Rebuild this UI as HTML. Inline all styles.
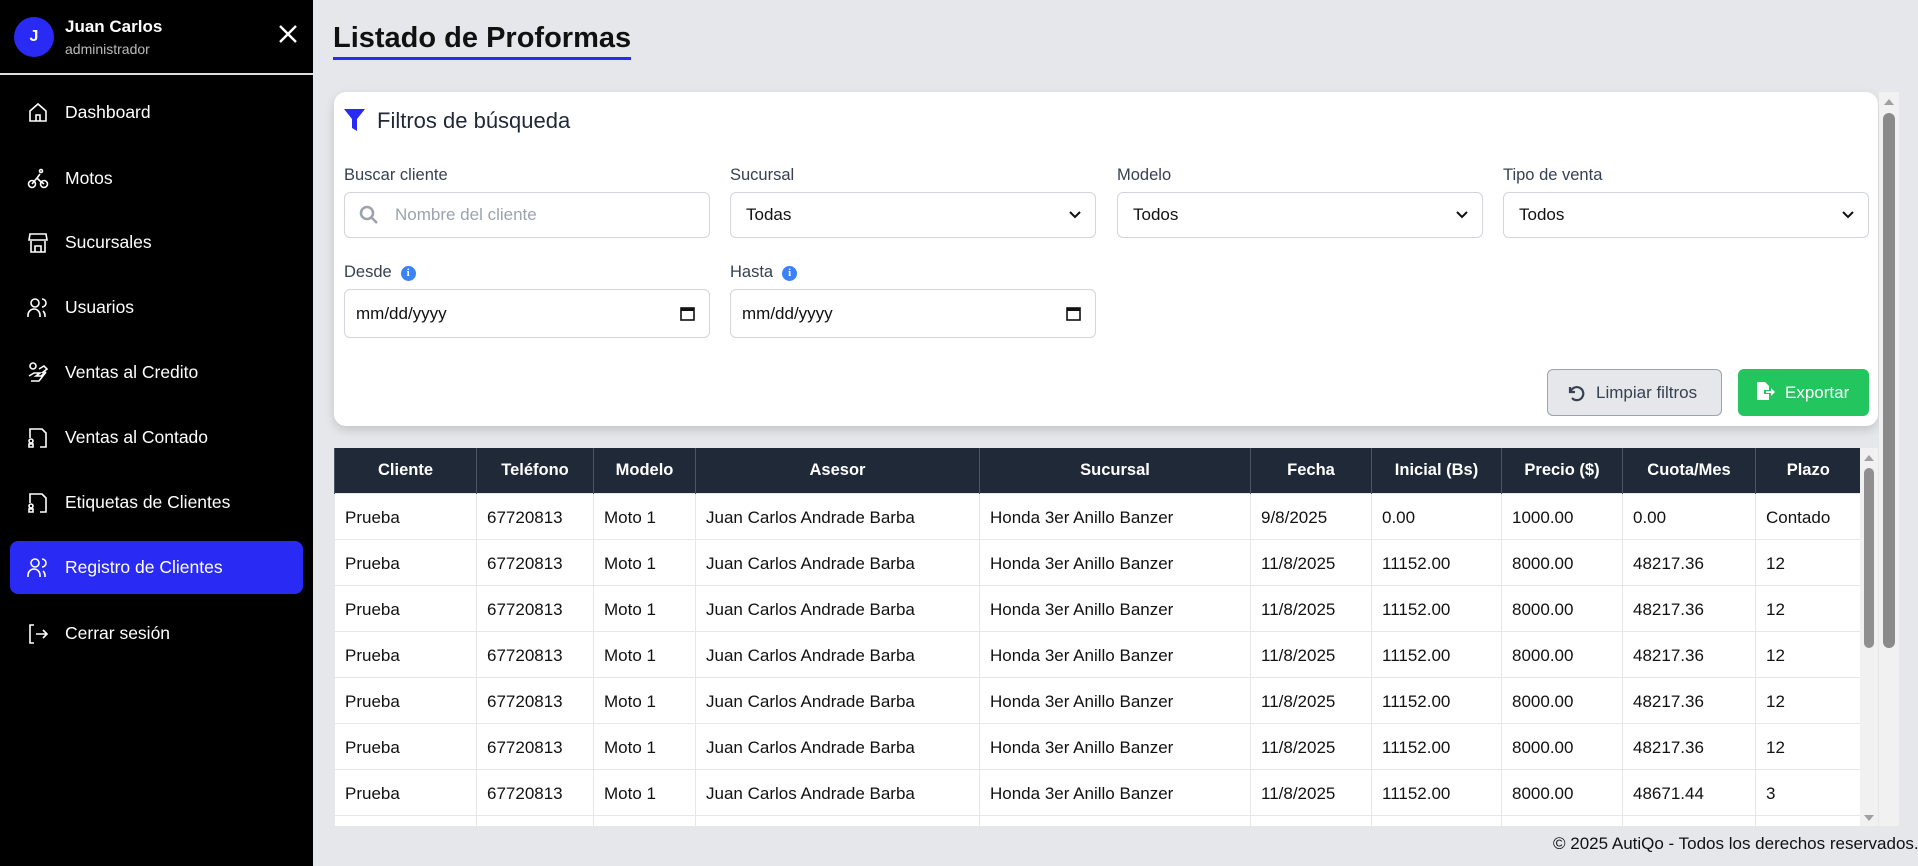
<!DOCTYPE html>
<html><head><meta charset="utf-8"><style>
*{box-sizing:border-box;margin:0;padding:0}
body{width:1918px;height:866px;overflow:hidden;background:#e5e7eb;font-family:"Liberation Sans",sans-serif;position:relative;color:#111827}
.sb{position:absolute;left:0;top:0;width:313px;height:866px;background:#000;color:#fff}
.av{position:absolute;left:14px;top:17px;width:40px;height:40px;border-radius:50%;background:#2a2af5;color:#fff;font-weight:bold;font-size:16px;text-align:center;line-height:40px}
.nm{position:absolute;left:65px;top:17px;font-size:17px;font-weight:bold}
.rl{position:absolute;left:65px;top:41px;font-size:14px;color:#bbb}
.x{position:absolute;left:276px;top:22px}
.hr{position:absolute;left:0;top:73px;width:313px;height:2px;background:#ddd}
.nav{position:absolute;left:10px;width:293px;height:53px;border-radius:8px;font-size:17.5px;line-height:53px;padding-left:55px}
.nav svg{position:absolute;left:16px;top:15px}
.act{background:#2a2af5}
h1{position:absolute;left:333px;top:22px;font-size:29px;font-weight:bold;color:#111;border-bottom:3px solid #2a2af5;padding-bottom:3px;line-height:32px}
.card{position:absolute;left:334px;top:92px;width:1544px;height:334px;background:#fff;border-radius:12px;box-shadow:0 4px 10px rgba(0,0,0,.15)}
.ft{position:absolute;left:377px;top:108px;font-size:22px;color:#1f2937}
.lb{position:absolute;font-size:16.5px;color:#374151}
.in{position:absolute;width:366px;height:46px;border:1px solid #d1d5db;border-radius:6px;background:#fff;font-size:17px;padding-left:15px;line-height:44px;color:#111}
.in .ar{position:absolute;right:14px;top:0}
.info{display:inline-block;width:15px;height:15px;border-radius:50%;background:#3b82f6;color:#fff;font-size:11px;font-weight:bold;text-align:center;line-height:15px;margin-left:9px;vertical-align:1px;font-family:"Liberation Serif",serif}
.btn{position:absolute;top:369px;height:47px;border-radius:6px;font-size:17px;line-height:45px}
table{position:absolute;left:334px;top:448px;border-collapse:collapse;table-layout:fixed;width:1526px;background:#fff}
th{background:#1f2937;color:#fff;font-size:16.5px;font-weight:bold;height:45px;border-left:1px solid #4b5563}
td{height:46px;font-size:17px;padding-left:10px;padding-top:3px;border:1px solid #e5e7eb;color:#111}
.clip{position:absolute;left:334px;top:448px;width:1530px;height:378px;overflow:hidden}
.clip table{left:0;top:0}
</style></head><body>
<div class="sb">
<div class="av">J</div>
<div class="nm">Juan Carlos</div>
<div class="rl">administrador</div>
<svg class="x" width="24" height="24" viewBox="0 0 24 24"><path d="M4 4L20 20M20 4L4 20" stroke="#fff" stroke-width="2.4"/></svg>
<div class="hr"></div>
<div class="nav" style="top:86px"><svg width="24" height="24" viewBox="0 0 24 24" fill="none" stroke="#fff" stroke-width="1.6"><path d="M4 10L12 3l8 7v10H4z"/><path d="M10 20v-6h4v6"/></svg>Dashboard</div>
<div class="nav" style="top:152px"><svg width="24" height="24" viewBox="0 0 24 24" fill="none" stroke="#fff" stroke-width="1.6"><circle cx="6" cy="17" r="3.5"/><circle cx="18" cy="17" r="3.5"/><circle cx="15" cy="4" r="1.5"/><path d="M6 17l5-6 3 3 4 3M11 11l3-4"/></svg>Motos</div>
<div class="nav" style="top:216px"><svg width="24" height="24" viewBox="0 0 24 24" fill="none" stroke="#fff" stroke-width="1.6"><path d="M4 3h16l1 6H3z M5 10v11h14V10 M9 21v-6h6v6"/></svg>Sucursales</div>
<div class="nav" style="top:281px"><svg width="24" height="24" viewBox="0 0 24 24" fill="none" stroke="#fff" stroke-width="1.6"><circle cx="9" cy="7" r="4"/><path d="M2 21v-2a6 6 0 0 1 12 0v2M16 3a4 4 0 0 1 0 8M19 21v-2a6 6 0 0 0-2-4"/></svg>Usuarios</div>
<div class="nav" style="top:346px"><svg width="24" height="24" viewBox="0 0 24 24" fill="none" stroke="#fff" stroke-width="1.6"><circle cx="7" cy="5" r="3"/><path d="M3 15l5-3h6l-4 3h5l5-4-7 9H5M13 8l5-3 3 3-5 4"/></svg>Ventas al Credito</div>
<div class="nav" style="top:411px"><svg width="24" height="24" viewBox="0 0 24 24" fill="none" stroke="#fff" stroke-width="1.6"><path d="M8 3h8l4 4v14h-6M4 12V3h4"/><circle cx="5" cy="15" r="2"/><path d="M3 21v-3h4v3z"/></svg>Ventas al Contado</div>
<div class="nav" style="top:476px"><svg width="24" height="24" viewBox="0 0 24 24" fill="none" stroke="#fff" stroke-width="1.6"><path d="M8 3h8l4 4v14h-6M4 12V3h4"/><circle cx="5" cy="15" r="2"/><path d="M3 21v-3h4v3z"/></svg>Etiquetas de Clientes</div>
<div class="nav act" style="top:541px"><svg width="24" height="24" viewBox="0 0 24 24" fill="none" stroke="#fff" stroke-width="1.6"><circle cx="9" cy="7" r="4"/><path d="M2 21v-2a6 6 0 0 1 12 0v2M16 3a4 4 0 0 1 0 8M19 21v-2a6 6 0 0 0-2-4"/></svg>Registro de Clientes</div>
<div class="nav" style="top:607px"><svg width="24" height="24" viewBox="0 0 24 24" fill="none" stroke="#fff" stroke-width="1.6"><path d="M8 3H4v18h4M10 12h11M17 8l4 4-4 4"/></svg>Cerrar sesión</div>
</div>

<h1>Listado de Proformas</h1>
<div class="card"></div>
<svg style="position:absolute;left:344px;top:109px" width="21" height="22" viewBox="0 0 21 22"><path d="M0 0h21l-8 10v12l-5-3v-9z" fill="#2a2af5"/></svg>
<div class="ft">Filtros de búsqueda</div>

<div class="lb" style="left:344px;top:166px">Buscar cliente</div>
<div class="lb" style="left:730px;top:166px">Sucursal</div>
<div class="lb" style="left:1117px;top:166px">Modelo</div>
<div class="lb" style="left:1503px;top:166px">Tipo de venta</div>
<div class="in" style="left:344px;top:192px;padding-left:50px;color:#9ca3af"><svg style="position:absolute;left:14px;top:12px" width="20" height="20" viewBox="0 0 20 20" fill="none" stroke="#9ca3af" stroke-width="2.6"><circle cx="8" cy="8" r="6"/><path d="M12.5 12.5L18 18"/></svg>Nombre del cliente</div>
<div class="in" style="left:730px;top:192px">Todas<svg class="ar" width="12" height="44" viewBox="0 0 12 44"><path d="M1 19l5 5 5-5" fill="none" stroke="#111" stroke-width="2"/></svg></div>
<div class="in" style="left:1117px;top:192px">Todos<svg class="ar" width="12" height="44" viewBox="0 0 12 44"><path d="M1 19l5 5 5-5" fill="none" stroke="#111" stroke-width="2"/></svg></div>
<div class="in" style="left:1503px;top:192px">Todos<svg class="ar" width="12" height="44" viewBox="0 0 12 44"><path d="M1 19l5 5 5-5" fill="none" stroke="#111" stroke-width="2"/></svg></div>

<div class="lb" style="left:344px;top:263px">Desde<span class="info">i</span></div>
<div class="lb" style="left:730px;top:263px">Hasta<span class="info">i</span></div>
<div class="in" style="left:344px;top:289px;height:49px;line-height:47px;padding-left:11px">mm/dd/yyyy<svg class="ar" style="top:16px" width="15" height="15" viewBox="0 0 15 15"><rect x="1" y="2" width="13" height="12" fill="none" stroke="#111" stroke-width="1.6"/><rect x="1" y="2" width="13" height="3" fill="#111"/></svg></div>
<div class="in" style="left:730px;top:289px;height:49px;line-height:47px;padding-left:11px">mm/dd/yyyy<svg class="ar" style="top:16px" width="15" height="15" viewBox="0 0 15 15"><rect x="1" y="2" width="13" height="12" fill="none" stroke="#111" stroke-width="1.6"/><rect x="1" y="2" width="13" height="3" fill="#111"/></svg></div>

<div class="btn" style="left:1547px;width:175px;background:#e5e7eb;border:1px solid #9ca3af;color:#374151;padding-left:48px"><svg style="position:absolute;left:18px;top:13px" width="20" height="20" viewBox="0 0 20 20" fill="none" stroke="#374151" stroke-width="2.2"><path d="M4 4v5h5"/><path d="M4.5 9A6.5 6.5 0 1 1 6 15"/></svg>Limpiar filtros</div>
<div class="btn" style="left:1738px;width:131px;background:#22c55e;color:#fff;padding-left:47px;line-height:47px"><svg style="position:absolute;left:18px;top:13px" width="20" height="20" viewBox="0 0 20 20" fill="#fff"><path d="M1 0h8l4 4v4H8v4h5v6H1z"/><path d="M10 9h5V6l4 4-4 4v-3h-5z"/></svg>Exportar</div>

<div class="clip"><table>
<colgroup><col style="width:142px"><col style="width:117px"><col style="width:102px"><col style="width:284px"><col style="width:271px"><col style="width:121px"><col style="width:130px"><col style="width:121px"><col style="width:133px"><col style="width:105px"></colgroup>
<tr><th>Cliente</th><th>Teléfono</th><th>Modelo</th><th>Asesor</th><th>Sucursal</th><th>Fecha</th><th>Inicial (Bs)</th><th>Precio ($)</th><th>Cuota/Mes</th><th>Plazo</th></tr>
<tr><td>Prueba</td><td>67720813</td><td>Moto 1</td><td>Juan Carlos Andrade Barba</td><td>Honda 3er Anillo Banzer</td><td>9/8/2025</td><td>0.00</td><td>1000.00</td><td>0.00</td><td>Contado</td></tr>
<tr><td>Prueba</td><td>67720813</td><td>Moto 1</td><td>Juan Carlos Andrade Barba</td><td>Honda 3er Anillo Banzer</td><td>11/8/2025</td><td>11152.00</td><td>8000.00</td><td>48217.36</td><td>12</td></tr>
<tr><td>Prueba</td><td>67720813</td><td>Moto 1</td><td>Juan Carlos Andrade Barba</td><td>Honda 3er Anillo Banzer</td><td>11/8/2025</td><td>11152.00</td><td>8000.00</td><td>48217.36</td><td>12</td></tr>
<tr><td>Prueba</td><td>67720813</td><td>Moto 1</td><td>Juan Carlos Andrade Barba</td><td>Honda 3er Anillo Banzer</td><td>11/8/2025</td><td>11152.00</td><td>8000.00</td><td>48217.36</td><td>12</td></tr>
<tr><td>Prueba</td><td>67720813</td><td>Moto 1</td><td>Juan Carlos Andrade Barba</td><td>Honda 3er Anillo Banzer</td><td>11/8/2025</td><td>11152.00</td><td>8000.00</td><td>48217.36</td><td>12</td></tr>
<tr><td>Prueba</td><td>67720813</td><td>Moto 1</td><td>Juan Carlos Andrade Barba</td><td>Honda 3er Anillo Banzer</td><td>11/8/2025</td><td>11152.00</td><td>8000.00</td><td>48217.36</td><td>12</td></tr>
<tr><td>Prueba</td><td>67720813</td><td>Moto 1</td><td>Juan Carlos Andrade Barba</td><td>Honda 3er Anillo Banzer</td><td>11/8/2025</td><td>11152.00</td><td>8000.00</td><td>48671.44</td><td>3</td></tr>
<tr><td></td><td></td><td></td><td></td><td></td><td></td><td></td><td></td><td></td><td></td></tr>
</table>
<div style="position:absolute;left:1530px;top:0;width:14px;height:378px;background:#f1f1f1"></div>
</div>
<div style="position:absolute;left:1860px;top:448px;width:18px;height:378px;background:#f1f1f1"></div>
<div style="position:absolute;left:1864px;top:468px;width:10px;height:180px;border-radius:5px;background:#8f8f8f"></div>
<svg style="position:absolute;left:1863px;top:452px" width="12" height="10"><path d="M1 9L6 3l5 6z" fill="#a0a0a0"/></svg>
<svg style="position:absolute;left:1863px;top:814px" width="12" height="10"><path d="M1 1L6 7l5-6z" fill="#a0a0a0"/></svg>
<div style="position:absolute;left:1879px;top:92px;width:20px;height:734px;background:#f1f1f1"></div>
<div style="position:absolute;left:1883px;top:113px;width:12px;height:535px;border-radius:6px;background:#8a8a8a"></div>
<svg style="position:absolute;left:1883px;top:96px" width="12" height="10"><path d="M1 9L6 3l5 6z" fill="#a0a0a0"/></svg>
<div style="position:absolute;left:313px;top:826px;width:1605px;height:40px;background:#e5e7eb"></div>
<div style="position:absolute;left:1500px;top:834px;width:440px;font-size:17px;color:#111;white-space:nowrap;text-align:left;padding-left:53px">© 2025 AutiQo - Todos los derechos reservados.</div>
</body></html>
